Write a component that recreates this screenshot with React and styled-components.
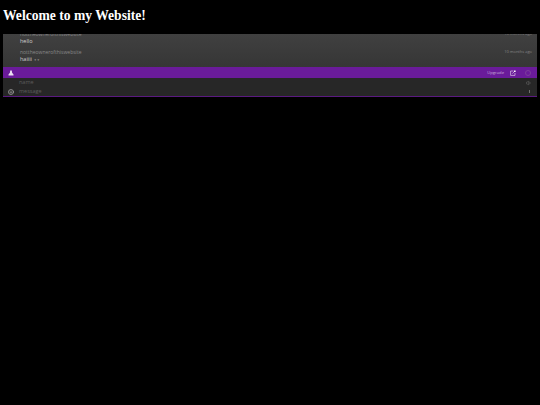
import styled, { createGlobalStyle } from 'styled-components';
import { Smile, Volume1 } from 'lucide-react';

const GlobalStyle = createGlobalStyle`
  html, body {
    margin: 0;
    background: #000;
    height: 100%;
  }
`;

const messages = [
  { name: 'nottheownerofthiswebsite', time: '10 months ago', text: 'hello' },
  { name: 'nottheownerofthiswebsite', time: '10 months ago', text: 'haiiii', emotes: '✦✦' },
];

const Page = styled.div`
  padding: 7px 3px 0;
`;

const Title = styled.h1`
  margin: 0 0 9px;
  height: 18px;
  font: bold 13.6px/18px 'Liberation Serif', serif;
  color: #fff;
`;

const Chat = styled.div`
  display: flex;
  flex-direction: column;
  height: 63px;
  border-bottom: 1px solid #5a1a80;
  box-sizing: border-box;
`;

const Feed = styled.div`
  height: 33px;
  overflow: hidden;
  background: linear-gradient(#404040, #363636);
  display: flex;
  flex-direction: column;
  justify-content: flex-end;
  padding: 0 5px 4px 17px;
  box-sizing: border-box;
  gap: 4px;
`;

const Message = styled.div`
  display: flex;
  flex-direction: column;
`;

const MetaRow = styled.div`
  display: flex;
  justify-content: space-between;
  align-items: center;
  height: 6px;
  font: 5px/6px 'Open Sans', sans-serif;
  color: #888;
`;

const Time = styled.span`
  font-size: 4px;
  color: #858585;
`;

const Body = styled.div`
  height: 8px;
  font: 5.5px/8px 'Open Sans', sans-serif;
  color: #cfcfcf;
`;

const Emotes = styled.span`
  margin-left: 1px;
  font-size: 3px;
  line-height: 0;
  color: #a8a8a8;
`;

const TopBar = styled.div`
  height: 11px;
  background: #6a1b9a;
  display: flex;
  align-items: center;
  padding: 0 6px 0 5px;
  color: #e6d7ee;
`;

const Upgrade = styled.span`
  margin-left: auto;
  margin-right: 6px;
  font: 4.2px/6px 'Open Sans', sans-serif;
  color: #c9acd9;
`;

const Ring = styled.span`
  width: 4px;
  height: 4px;
  border: 1px solid #7d3d9c;
  border-radius: 50%;
  margin-left: 9px;
`;

const Composer = styled.div`
  flex: 1;
  background: #272727;
  display: grid;
  grid-template-columns: 16px 1fr 10px;
  grid-template-rows: 9px 9px;
  align-items: center;
  padding-right: 5px;
  color: #6f6f6f;
`;

const Field = styled.span`
  grid-column: 2;
  font: 5.5px/9px 'Open Sans', sans-serif;
  color: #5c5c5c;
`;

const IconCell = styled.span`
  display: flex;
  justify-content: ${(props) => (props.$end ? 'flex-end' : 'center')};
  padding-right: ${(props) => (props.$end ? '0' : '1px')};
  color: ${(props) => (props.$end ? '#6f6f6f' : '#a5a5a5')};
`;

const SendMark = styled.span`
  width: 1px;
  height: 3px;
  margin-right: 2px;
  background: #6f6f6f;
`;

function AlertIcon() {
  return (
    <svg width="6" height="6" viewBox="0 0 6 6" fill="#eadff0">
      <path d="M2.2 0.4h1.6l0.3 2.4 1.4 1.6v1h-5v-1l1.4-1.6z" />
    </svg>
  );
}

function ShareIcon() {
  return (
    <svg width="6" height="6" viewBox="0 0 6 6" fill="none" stroke="#dcc8e8" strokeWidth="0.7">
      <path d="M3.4 1H0.6v4.4H5V3" />
      <path d="M2.4 3.6 4.8 1.2" />
      <path d="M4 0.4h1.6v1.6H4z" fill="#fff" stroke="none" />
    </svg>
  );
}

export default function App() {
  return (
    <>
      <GlobalStyle />
      <Page>
        <Title>Welcome to my Website!</Title>
        <Chat>
          <Feed>
            {messages.map(({ name, time, text, emotes }) => (
              <Message key={text}>
                <MetaRow>
                  <span>{name}</span>
                  <Time>{time}</Time>
                </MetaRow>
                <Body>
                  {text}
                  {emotes && <Emotes> {emotes}</Emotes>}
                </Body>
              </Message>
            ))}
          </Feed>
          <TopBar>
            <AlertIcon />
            <Upgrade>Upgrade</Upgrade>
            <ShareIcon />
            <Ring />
          </TopBar>
          <Composer>
            <span />
            <Field>name</Field>
            <IconCell $end>
              <Volume1 size={6} />
            </IconCell>
            <IconCell>
              <Smile size={6} strokeWidth={3} />
            </IconCell>
            <Field>message</Field>
            <IconCell $end>
              <SendMark />
            </IconCell>
          </Composer>
        </Chat>
      </Page>
    </>
  );
}
